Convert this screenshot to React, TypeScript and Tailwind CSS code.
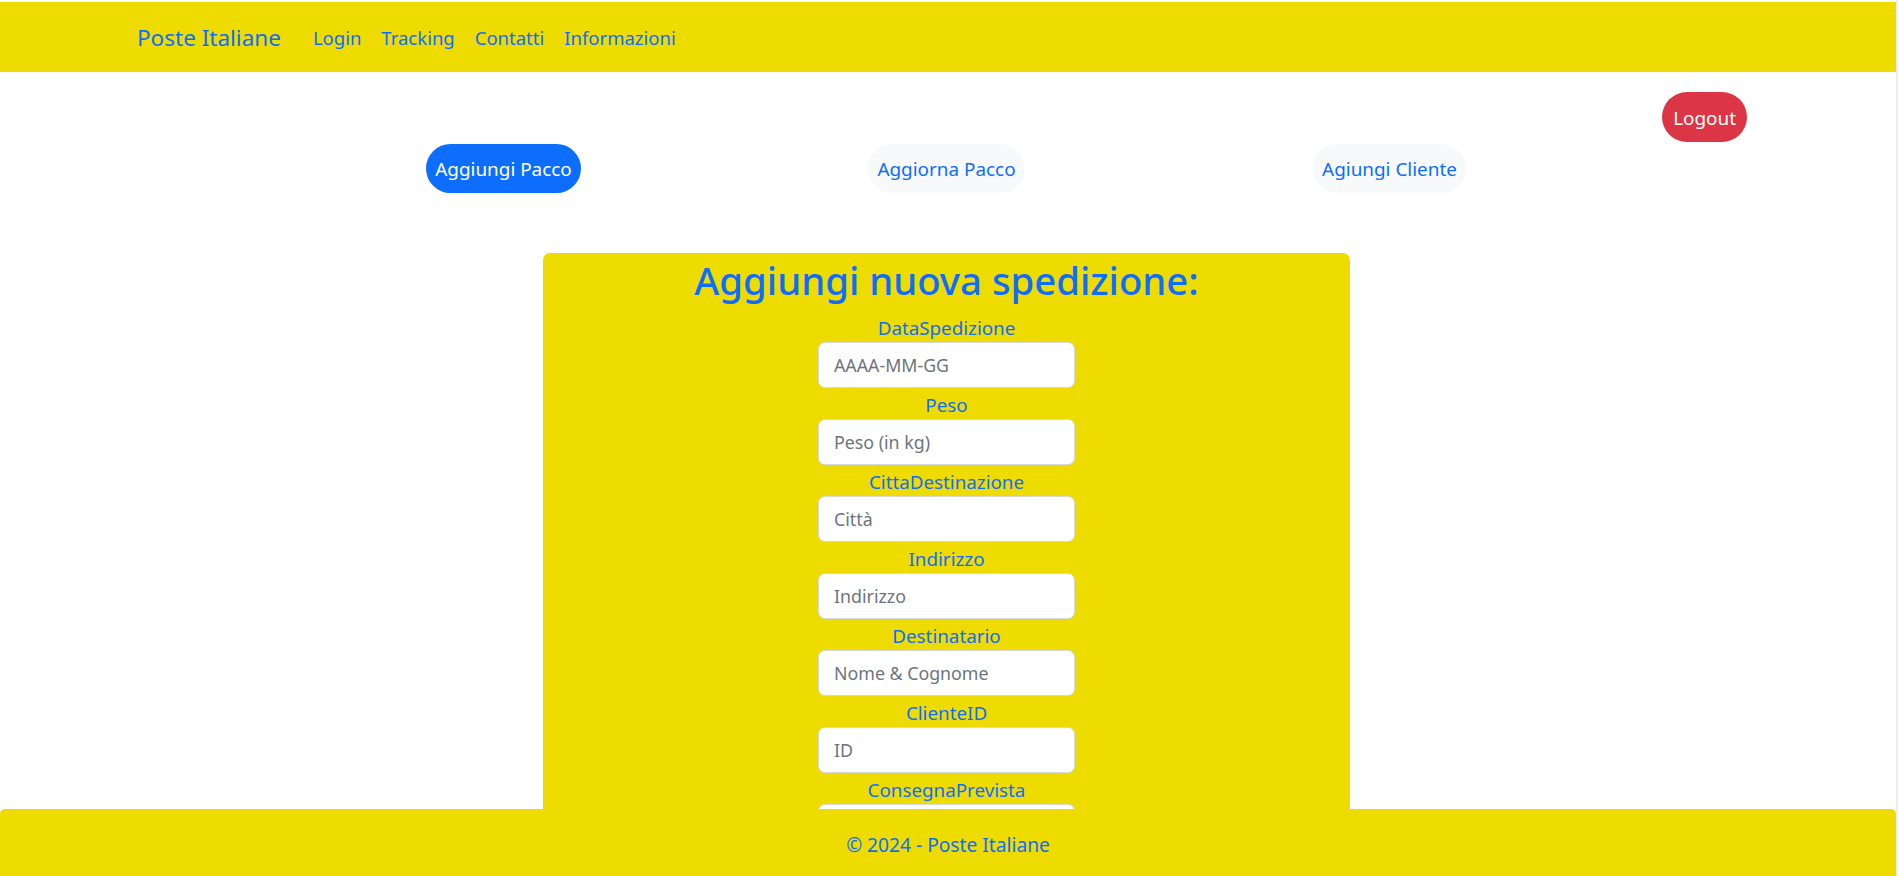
import React from "react";

const font = { fontFamily: '"Noto Sans", "Open Sans", sans-serif' };

const fields = [
  { label: "DataSpedizione", ph: "AAAA-MM-GG" },
  { label: "Peso", ph: "Peso (in kg)" },
  { label: "CittaDestinazione", ph: "Città" },
  { label: "Indirizzo", ph: "Indirizzo" },
  { label: "Destinatario", ph: "Nome & Cognome" },
  { label: "ClienteID", ph: "ID" },
  { label: "ConsegnaPrevista", ph: "AAAA-MM-GG" },
];

export default function App() {
  return (
    <div
      className="relative flex h-[876px] w-full overflow-hidden bg-white text-[#0d6efd]"
      style={font}
    >
      <div className="flex w-[1896px] shrink-0 flex-col pt-[2px]">
        {/* Navbar */}
        <nav className="flex h-[70px] shrink-0 items-center bg-[#eedb00] pl-[137px] pt-[2px]">
          <span className="mr-[22px] text-[22.5px] leading-none text-[#0d6efd]">
            Poste Italiane
          </span>
          <div className="flex items-center text-[18.5px] leading-none">
            <a className="px-[10px]">Login</a>
            <a className="px-[10px]">Tracking</a>
            <a className="px-[10px]">Contatti</a>
            <a className="px-[10px]">Informazioni</a>
          </div>
        </nav>

        {/* Logout */}
        <div className="flex h-[71px] shrink-0 justify-end pr-[149px] pt-[20px]">
          <button className="h-[50px] rounded-full bg-[#dc3545] px-[11px] pt-[2px] text-[18.9px] leading-none text-white">
            Logout
          </button>
        </div>

        {/* Tabs */}
        <div className="ml-[282px] mt-[1px] grid w-[1329px] shrink-0 grid-cols-3">
          <div className="flex justify-center">
            <button className="h-[49px] rounded-full bg-[#0d6efd] px-[9px] pt-[2px] text-[18.9px] leading-none text-white">
              Aggiungi Pacco
            </button>
          </div>
          <div className="flex justify-center">
            <button className="h-[49px] rounded-full bg-[#f8f9fa] px-[9px] pt-[2px] text-[18.9px] leading-none text-[#0d6efd]">
              Aggiorna Pacco
            </button>
          </div>
          <div className="flex justify-center">
            <button className="h-[49px] rounded-full bg-[#f8f9fa] px-[9px] pt-[2px] text-[18.9px] leading-none text-[#0d6efd]">
              Agiungi Cliente
            </button>
          </div>
        </div>

        {/* Card */}
        <div className="ml-[543px] mt-[60px] flex w-[807px] shrink-0 flex-col items-center rounded-[7px] bg-[#eedb00] pb-[20px] pt-[4px]">
          <h2 className="mb-[10px] h-[46px] whitespace-nowrap text-[38.3px] font-medium leading-[46px] text-[#0d6efd]">
            Aggiungi nuova spedizione:
          </h2>
          {fields.map((f) => (
            <div key={f.label} className="mb-[2px] flex flex-col items-center">
              <label className="h-[29px] text-[18.8px] leading-[30px] text-[#0d6efd]">
                {f.label}
              </label>
              <input
                placeholder={f.ph}
                className="h-[46px] w-[257px] rounded-[7px] border border-[#d6d9dc] bg-white px-[15px] text-[17.8px] text-[#212529] placeholder:text-[#6c757d] outline-none"
              />
            </div>
          ))}
        </div>
      </div>
      <div className="w-[2px] shrink-0 bg-[#ececec]" />

      {/* Footer */}
      <footer className="absolute bottom-0 left-0 flex h-[67px] w-[1896px] items-center justify-center rounded-t-[5px] bg-[#eedb00] pt-[6px] text-[19.2px] text-[#0d6efd]">
        © 2024 - Poste Italiane
      </footer>
    </div>
  );
}
